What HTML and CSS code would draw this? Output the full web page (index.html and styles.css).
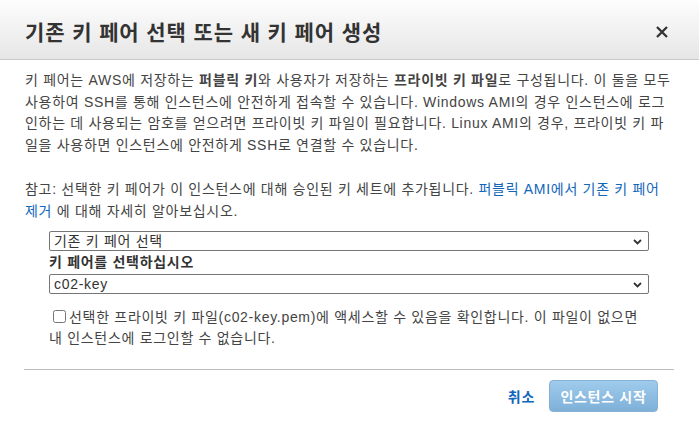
FILE: index.html
```html
<!DOCTYPE html>
<html lang="ko">
<head>
    <meta charset="UTF-8">
    <title>키 페어 선택</title>
    <link rel="stylesheet" href="styles.css">
</head>
<body>
<div class="modal">
    <div class="modal-header">
        <h1 class="modal-title">기존 키 페어 선택 또는 새 키 페어 생성</h1>
        <span class="close">
            <svg width="12" height="12" viewBox="0 0 12 12"><path d="M1 1L11 11M11 1L1 11" stroke="#333" stroke-width="2.3"/></svg>
        </span>
    </div>
    <div class="modal-body">
        <p class="intro">키 페어는 AWS에 저장하는 <b>퍼블릭 키</b>와 사용자가 저장하는 <b>프라이빗 키 파일</b>로 구성됩니다. 이 둘을 모두 사용하여 SSH를 통해 인스턴스에 안전하게 접속할 수 있습니다. Windows AMI의 경우 인스턴스에 로그인하는 데 사용되는 암호를 얻으려면 프라이빗 키 파일이 필요합니다. Linux AMI의 경우, 프라이빗 키 파일을 사용하면 인스턴스에 안전하게 SSH로 연결할 수 있습니다.</p>
        <p class="note">참고: 선택한 키 페어가 이 인스턴스에 대해 승인된 키 세트에 추가됩니다. <a href="#">퍼블릭 AMI에서 기존 키 페어 제거</a> 에 대해 자세히 알아보십시오.</p>
        <div class="form">
            <div class="select-wrap">
                <select class="select">
                    <option>기존 키 페어 선택</option>
                    <option>새 키 페어 생성</option>
                </select>
                <svg class="chevron" width="9" height="6" viewBox="0 0 9 6"><path d="M1 1L4.5 4.5L8 1" fill="none" stroke="#333" stroke-width="1.8"/></svg>
            </div>
            <div class="field-label">키 페어를 선택하십시오</div>
            <div class="select-wrap">
                <select class="select">
                    <option>c02-key</option>
                </select>
                <svg class="chevron" width="9" height="6" viewBox="0 0 9 6"><path d="M1 1L4.5 4.5L8 1" fill="none" stroke="#333" stroke-width="1.8"/></svg>
            </div>
            <label class="ack"><input type="checkbox">선택한 프라이빗 키 파일(c02-key.pem)에 액세스할 수 있음을 확인합니다. 이 파일이 없으면 내 인스턴스에 로그인할 수 없습니다.</label>
        </div>
    </div>
    <div class="modal-footer">
        <a href="#" class="cancel">취소</a>
        <button class="btn-primary">인스턴스 시작</button>
    </div>
</div>
</body>
</html>
```

FILE: styles.css
```css
*{
    padding: 0;
    margin: 0;
    box-sizing: border-box;
}
body{
    font-family: "Liberation Sans", "Noto Sans CJK KR", sans-serif;
    font-size: 14px;
    letter-spacing: 0.7px;
    color: #444;
    background: #fff;
}
.modal{
    width: 699px;
    height: 432px;
}
.modal-header{
    height: 60px;
    padding: 0 31px 0 25px;
    display: flex;
    align-items: center;
    justify-content: space-between;
    background: linear-gradient(#fdfdfd, #e6e6e6);
    border-bottom: 1px solid #c9c9c9;
}
.modal-title{
    font-size: 21px;
    font-weight: bold;
    color: #333;
    letter-spacing: 0.9px;
    margin-top: 2px;
}
.close{
    display: flex;
    margin-top: 4px;
}
.modal-body{
    padding: 10px 25px 0 25px;
}
.intro,
.note{
    line-height: 21.7px;
}
.note{
    margin-top: 22px;
}
.note a{
    color: #1166bb;
    text-decoration: none;
}
.form{
    width: 600px;
    margin: 9px 0 0 24px;
}
.select-wrap{
    position: relative;
}
.select{
    display: block;
    width: 600px;
    height: 20px;
    padding: 0 4px;
    border: 1px solid #767676;
    border-radius: 2px;
    background: #fff;
    font-family: inherit;
    font-size: 14px;
    letter-spacing: 0.7px;
    color: #333;
    appearance: none;
    -webkit-appearance: none;
}
.chevron{
    position: absolute;
    right: 7px;
    top: 8px;
}
.field-label{
    font-weight: bold;
    color: #333;
    line-height: 23px;
}
.ack{
    display: block;
    margin-top: 13px;
    line-height: 21px;
    color: #444;
}
.ack input{
    margin: 0 3px 0 4px;
    width: 13px;
    height: 13px;
    vertical-align: -1px;
}
.modal-footer{
    margin: 20px 25px 0 24px;
    border-top: 1px solid #bbb;
    padding: 10px 16px 0 0;
    display: flex;
    justify-content: flex-end;
    align-items: center;
    gap: 14px;
}
.cancel{
    color: #1166bb;
    text-decoration: none;
    font-weight: bold;
}
.btn-primary{
    width: 109px;
    height: 32px;
    border: 1px solid #86b0d4;
    border-radius: 4px;
    background: linear-gradient(#9fcbec, #7eb0d8);
    color: #fff;
    font-family: inherit;
    font-size: 14px;
    letter-spacing: 0.7px;
    font-weight: bold;
}
```
